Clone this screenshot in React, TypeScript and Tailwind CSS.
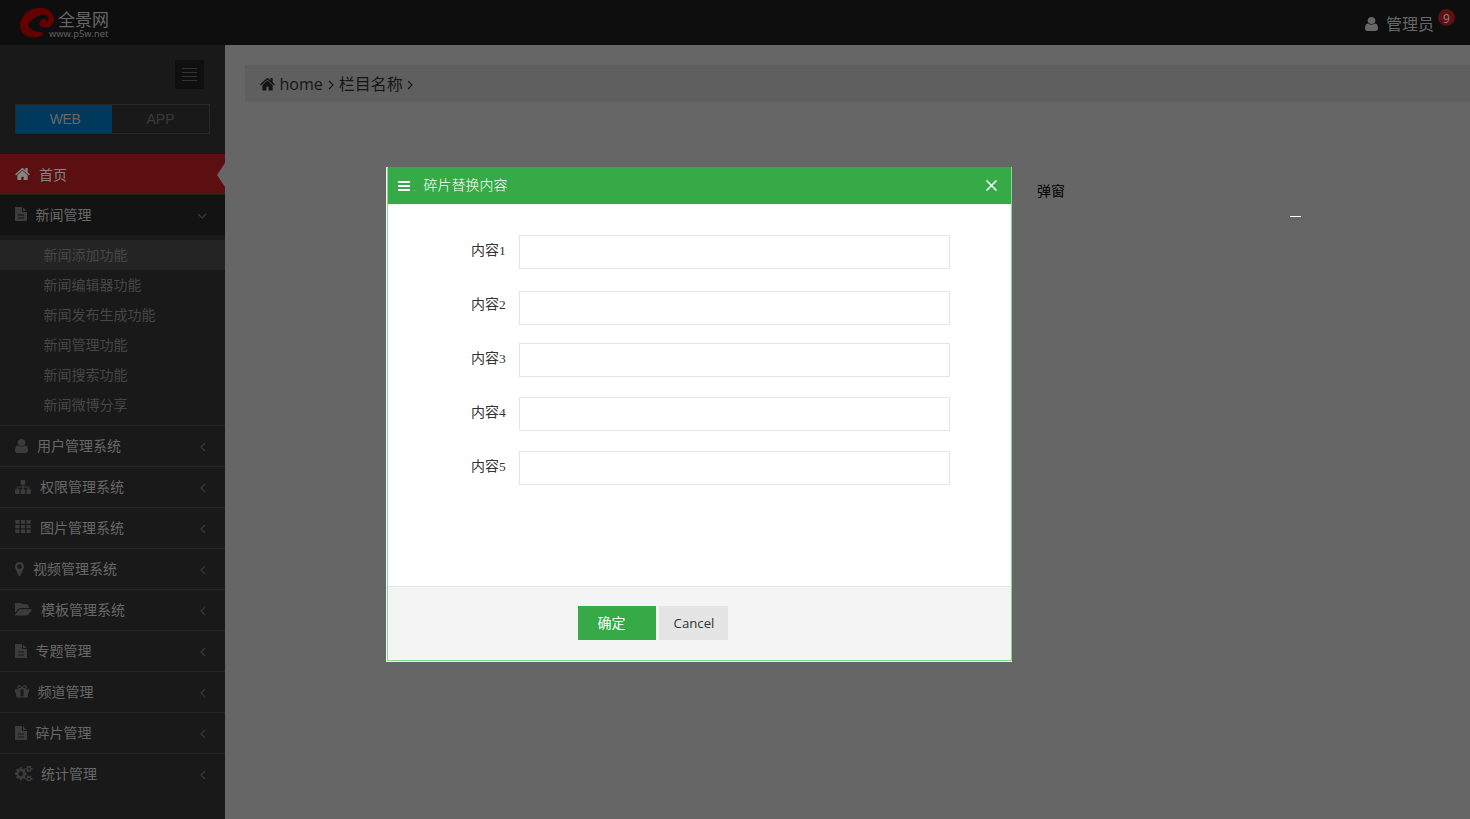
import React from "react";

type Glyph = { box: string; w: string; d: string };

const glyphs: Record<string, Glyph> = {
  home: {
    box: "62 253 1668 1283",
    w: "w-[15px] h-[12.5px]",
    d: "M1472 992v480q0 26-19 45t-45 19h-384v-384h-256v384h-384q-26 0-45-19t-19-45v-480q0-1 .5-3t.5-3l575-474 575 474q1 2 1 6zm223-69l-62 74q-8 9-21 11h-3q-13 0-21-7l-692-577-692 577q-12 8-24 7-13-2-21-11l-62-74q-8-10-7-23.5t11-21.5l719-599q32-26 76-26t76 26l244 204v-195q0-14 9-23t23-9h192q14 0 23 9t9 23v408l219 182q10 8 11 21.5t-7 23.5z",
  },
  user: {
    box: "256 128 1280 1536",
    w: "w-[13px] h-[14px]",
    d: "M1536 1399q0 109-62.5 187t-150.5 78h-854q-88 0-150.5-78t-62.5-187q0-85 8.5-160.5t31.5-152 58.5-131 94-89 134.5-34.5q131 128 313 128t313-128q76 0 134.5 34.5t94 89 58.5 131 31.5 152 8.5 160.5zm-256-887q0 159-112.5 271.5t-271.5 112.5-271.5-112.5-112.5-271.5 112.5-271.5 271.5-112.5 271.5 112.5 112.5 271.5z",
  },
  file: {
    box: "128 0 1536 1792",
    w: "w-[12px] h-[14px]",
    d: "M1596 476q14 14 28 36h-472v-472q22 14 36 28zm-476 164h544v1056q0 40-28 68t-68 28h-1344q-40 0-68-28t-28-68v-1600q0-40 28-68t68-28h800v544q0 40 28 68t68 28zm160 800v-64q0-14-9-23t-23-9h-704q-14 0-23 9t-9 23v64q0 14 9 23t23 9h704q14 0 23-9t9-23zm0-384v-64q0-14-9-23t-23-9h-704q-14 0-23 9t-9 23v64q0 14 9 23t23 9h704q14 0 23-9t9-23z",
  },
  sitemap: {
    box: "0 128 1792 1536",
    w: "w-[16px] h-[14px]",
    d: "M1792 1248v320q0 40-28 68t-68 28h-320q-40 0-68-28t-28-68v-320q0-40 28-68t68-28h96v-192h-512v192h96q40 0 68 28t28 68v320q0 40-28 68t-68 28h-320q-40 0-68-28t-28-68v-320q0-40 28-68t68-28h96v-192h-512v192h96q40 0 68 28t28 68v320q0 40-28 68t-68 28h-320q-40 0-68-28t-28-68v-320q0-40 28-68t68-28h96v-192q0-52 38-90t90-38h512v-192h-96q-40 0-68-28t-28-68v-320q0-40 28-68t68-28h320q40 0 68 28t28 68v320q0 40-28 68t-68 28h-96v192h512q52 0 90 38t38 90v192h96q40 0 68 28t28 68z",
  },
  grid: {
    box: "0 0 16 15",
    w: "w-[16px] h-[15px]",
    d: "M.3 0h4.2v3.8h-4.2zM5.9 0h4.2v3.8h-4.2zM11.5 0h4.2v3.8h-4.2zM.3 5h4.2v3.300h-4.2zM5.9 5h4.2v3.300h-4.2zM11.5 5h4.2v3.300h-4.2zM.3 9.500h4.2v3.500h-4.2zM5.9 9.500h4.2v3.500h-4.2zM11.5 9.500h4.2v3.500h-4.2z",
  },
  marker: {
    box: "384 128 1024 1536",
    w: "w-[9px] h-[14px]",
    d: "M1152 640q0-106-75-181t-181-75-181 75-75 181 75 181 181 75 181-75 75-181zm256 0q0 109-33 179l-364 774q-16 33-47.5 52t-67.5 19-67.5-19-46.5-52l-365-774q-33-70-33-179 0-212 150-362t362-150 362 150 150 362z",
  },
  folder: {
    box: "0 256 1815 1280",
    w: "w-[17px] h-[12.5px]",
    d: "M1815 952q0 31-31 66l-336 396q-43 51-120.5 86.5t-143.5 35.5h-1088q-34 0-60.5-13t-26.5-43q0-31 31-66l336-396q43-51 120.5-86.5t143.5-35.5h1088q34 0 60.5 13t26.5 43zm-343-344v160h-832q-94 0-197 47.5t-164 119.5l-337 396-5 6q0-4-.5-12.5t-.5-12.5v-960q0-92 66-158t158-66h320q92 0 158 66t66 158v32h544q92 0 158 66t66 158z",
  },
  gift: {
    box: "128 192 1536 1344",
    w: "w-[14px] h-[12.5px]",
    d: "M1056 1356v-716h-320v716q0 25 18 38.5t46 13.5h192q28 0 46-13.5t18-38.5zm-456-844h195l-126-161q-26-31-69-31-40 0-68 28t-28 68 28 68 68 28zm688-96q0-40-28-68t-68-28q-43 0-69 31l-125 161h194q40 0 68-28t28-68zm376 256v320q0 14-9 23t-23 9h-96v416q0 40-28 68t-68 28h-1088q-40 0-68-28t-28-68v-416h-96q-14 0-23-9t-9-23v-320q0-14 9-23t23-9h440q-93 0-158.5-65.5t-65.5-158.5 65.5-158.5 158.5-65.5q107 0 168 77l128 165 128-165q61-77 168-77 93 0 158.5 65.5t65.5 158.5-65.5 158.5-158.5 65.5h440q14 0 23 9t9 23z",
  },
  cogs: {
    box: "0 120 1920 1552",
    w: "w-[17.5px] h-[15.5px]",
    d: "M896 896q0-106-75-181t-181-75-181 75-75 181 75 181 181 75 181-75 75-181zm768 512q0-52-38-90t-90-38-90 38-38 90q0 53 37.5 90.5t90.5 37.5 90.5-37.5 37.5-90.5zm0-1024q0-52-38-90t-90-38-90 38-38 90q0 53 37.5 90.5t90.5 37.5 90.5-37.5 37.5-90.5zm-384 421v185q0 10-7 19.5t-16 10.5l-155 24q-11 35-32 76 34 48 90 115 7 11 7 20 0 12-7 19-23 30-82.5 89.5t-78.5 59.5q-11 0-21-7l-115-90q-37 19-77 31-11 108-23 155-7 24-30 24h-186q-11 0-20-7.5t-10-17.5l-23-153q-34-10-75-31l-118 89q-7 7-20 7-11 0-21-8-144-133-144-160 0-9 7-19 10-14 41-53t47-61q-23-44-35-82l-152-24q-10-1-17-9.5t-7-19.5v-185q0-10 7-19.5t16-10.5l155-24q11-35 32-76-34-48-90-115-7-11-7-20 0-12 7-20 22-30 82-89t79-59q11 0 21 7l115 90q34-18 77-32 11-108 23-154 7-24 30-24h186q11 0 20 7.5t10 17.5l23 153q34 10 75 31l118-89q8-7 20-7 11 0 21 8 144 133 144 160 0 8-7 19-12 16-42 54t-45 60q23 48 34 82l152 23q10 2 17 10.5t7 19.5zm640 533v140q0 16-149 31-12 27-30 52 51 113 51 138 0 4-4 7-122 71-124 71-8 0-46-47t-52-68q-20 2-30 2t-30-2q-14 21-52 68t-46 47q-2 0-124-71-4-3-4-7 0-25 51-138-18-25-30-52-149-15-149-31v-140q0-16 149-31 13-29 30-52-51-113-51-138 0-4 4-7 4-2 35-20t59-34 30-16q8 0 46 46.5t52 67.5q20-2 30-2t30 2q51-71 92-112l6-2q4 0 124 70 4 3 4 7 0 25-51 138 17 23 30 52 149 15 149 31zm0-1024v140q0 16-149 31-12 27-30 52 51 113 51 138 0 4-4 7-122 71-124 71-8 0-46-47t-52-68q-20 2-30 2t-30-2q-14 21-52 68t-46 47q-2 0-124-71-4-3-4-7 0-25 51-138-18-25-30-52-149-15-149-31v-140q0-16 149-31 13-29 30-52-51-113-51-138 0-4 4-7 4-2 35-20t59-34 30-16q8 0 46 46.5t52 67.5q20-2 30-2t30 2q51-71 92-112l6-2q4 0 124 70 4 3 4 7 0 25-51 138 17 23 30 52 149 15 149 31z",
  },
};

function Icon({ name, className = "" }: { name: string; className?: string }) {
  const g = glyphs[name];
  return (
    <svg viewBox={g.box} preserveAspectRatio="none" fill="currentColor" className={`shrink-0 ${g.w} ${className}`}>
      <path d={g.d} />
    </svg>
  );
}

function Chevron({ dir, className = "" }: { dir: "left" | "right" | "down"; className?: string }) {
  const paths = { left: "M5 1L1 5L5 9", right: "M1 1L5 5L1 9", down: "M1 1L5 5L9 1" };
  const down = dir === "down";
  return (
    <svg
      viewBox={down ? "0 0 10 6" : "0 0 6 10"}
      fill="none"
      stroke="currentColor"
      strokeWidth="1.1"
      className={`shrink-0 ${down ? "w-[10px] h-[6px]" : "w-[6px] h-[10px]"} ${className}`}
    >
      <path d={paths[dir]} />
    </svg>
  );
}

const newsItems = ["新闻添加功能", "新闻编辑器功能", "新闻发布生成功能", "新闻管理功能", "新闻搜索功能", "新闻微博分享"];

const sections = [
  { icon: "user", label: "用户管理系统", gap: "gap-[9px]" },
  { icon: "sitemap", label: "权限管理系统", gap: "gap-[9px]" },
  { icon: "grid", label: "图片管理系统", gap: "gap-[9px]" },
  { icon: "marker", label: "视频管理系统", gap: "gap-[9px]" },
  { icon: "folder", label: "模板管理系统", gap: "gap-[9px]" },
  { icon: "file", label: "专题管理", gap: "gap-[8.5px]" },
  { icon: "gift", label: "频道管理", gap: "gap-[8.5px]" },
  { icon: "file", label: "碎片管理", gap: "gap-[8.5px]" },
  { icon: "cogs", label: "统计管理", gap: "gap-[8.5px]" },
];

const fields = [
  { label: "内容", index: "1", space: "mt-[30px]", lift: "pb-[4px]" },
  { label: "内容", index: "2", space: "mt-[22px]", lift: "pb-[8px]" },
  { label: "内容", index: "3", space: "mt-[18px]", lift: "pb-[4px]" },
  { label: "内容", index: "4", space: "mt-[20px]", lift: "pb-[4px]" },
  { label: "内容", index: "5", space: "mt-[20px]", lift: "pb-[4px]" },
];

function Header() {
  return (
    <header className="flex h-[45px] shrink-0 justify-between bg-[#0e0e0e] text-[#676767]">
      <div className="flex pl-[20px] pt-[8px]">
        <svg viewBox="0 0 34 30" className="h-[30px] w-[34px] shrink-0" fill="#650000">
          <path d="M0 17.500C0 14 2 10 4.500 6.500C8 2 14 0 20.500 0C28 0 33.500 4.500 34 11C34 16.500 30.500 19.500 26 19.500C21.500 19.500 19 17 19.500 14.500C20 12 23 10.500 25.500 11.300C27.500 12 28 13 26.500 14.300C29 13 29 9.500 26.500 7.800C23 5.500 18.500 7.500 15 10C10.500 13 7.500 15.500 8.500 18C9.500 21 14.500 23.500 20 24C21.500 24.500 23.500 23.500 22.500 25.500L24 26L21.500 27.500L20.500 28.500L18.500 28.500L17 29.500C11 29.500 6 28.500 3.500 25.500C1 22.500 0 20.500 0 17.500Z" />
        </svg>
        <div className="-ml-[5px] flex flex-col">
          <span className="ml-[9px] mt-[2px] text-[17px] leading-[17px]">全景网</span>
          <span className="h-[12px] font-['Open_Sans'] text-[9.4px] leading-[13px]">www.p5w.net</span>
        </div>
      </div>
      <div className="flex pr-[15px] pt-[8px]">
        <Icon name="user" className="mt-[9px]" />
        <span className="ml-[8px] mt-[3px] text-[16px] leading-[24px]">管理员</span>
        <span className="ml-[4px] mt-px flex size-[17px] items-center justify-center rounded-full bg-[#5f0f12] pt-[2px] font-['Open_Sans'] text-[12px] leading-none text-[#858585]">
          9
        </span>
      </div>
    </header>
  );
}

function Sidebar() {
  return (
    <aside className="flex w-[225px] shrink-0 flex-col bg-[#191919] text-[14px] text-[#686868]">
      <div className="ml-[175px] mt-[15px] flex size-[29px] shrink-0 flex-col items-center justify-center gap-[3px] bg-[#0f0f0f]">
        <i className="h-px w-[15px] bg-[#333]" />
        <i className="h-px w-[15px] bg-[#333]" />
        <i className="h-px w-[15px] bg-[#333]" />
        <i className="h-px w-[15px] bg-[#333]" />
      </div>
      <div className="ml-[15px] mt-[15px] flex h-[30px] w-[195px] shrink-0 border border-[#292929] text-center font-['Liberation_Sans'] leading-[28px]">
        <span className="w-[96px] bg-[#00395b] pl-[2px] tracking-[-0.4px]">WEB</span>
        <span className="flex-1 text-[#3a3a3a]">APP</span>
      </div>
      <div className="mt-[20px] flex h-[41px] shrink-0 items-center justify-between border-b border-[#222] bg-[#5b0f11] pl-[15px]">
        <div className="flex items-center gap-[9px] text-[#858585]">
          <Icon name="home" />
          <span className="pt-px">首页</span>
        </div>
        <svg viewBox="0 0 8 24" className="mt-[2px] h-[24px] w-[8px]" fill="#666">
          <path d="M8 0V24L0 12Z" />
        </svg>
      </div>
      <div className="flex h-[40px] shrink-0 items-center bg-[#131313] pl-[15px] pr-[18px]">
        <Icon name="file" className="mb-[2px] text-[#3c3c3c]" />
        <span className="ml-[8.5px] flex-1 pb-[2px]">新闻管理</span>
        <Chevron dir="down" className="mt-px text-[#3a3a3a]" />
      </div>
      <ul className="flex flex-col py-[5px] text-[#464646]">
        {newsItems.map((item, i) => (
          <li key={item} className={`h-[30px] pl-[43.5px] leading-[28px] ${i === 0 ? "bg-[#242424]" : ""}`}>
            {item}
          </li>
        ))}
      </ul>
      {sections.map((s) => (
        <div key={s.label} className={`flex h-[41px] shrink-0 items-center border-t border-[#272727] pl-[15px] pr-[19.5px] ${s.gap}`}>
          <Icon name={s.icon} className="mb-px text-[#3c3c3c]" />
          <span className="flex-1 pb-[2px]">{s.label}</span>
          <Chevron dir="left" className="mt-px text-[#3a3a3a]" />
        </div>
      ))}
    </aside>
  );
}

function Dialog() {
  return (
    <section className="absolute left-[386px] top-[167px] flex h-[495px] w-[626px] border-b border-l border-white bg-white text-[14px] text-[#333]">
      <div className="flex flex-1 flex-col border-x border-b border-[#7be08b]">
        <div className="flex h-[37px] shrink-0 items-center bg-[#36aa47] pl-[10px] pr-[14px] text-white">
          <svg viewBox="0 0 12 10" className="mt-px h-[10px] w-[12px]" stroke="currentColor" strokeWidth="2">
            <path d="M0 1H12M0 5H12M0 9H12" />
          </svg>
          <i className="ml-[4px] mt-[10px] size-px bg-[#5cc8e8]" />
          <h1 className="ml-[8.5px] flex-1 pb-[2px] font-light">碎片替换内容</h1>
          <svg viewBox="0 0 11 11" className="h-[11px] w-[11px]" stroke="currentColor" strokeWidth="1.5">
            <path d="M.5 .5L10.500 10.500M10.500 .5L.5 10.500" />
          </svg>
        </div>
        <form className="flex flex-1 flex-col border-t border-[#eee]">
          {fields.map((f) => (
            <label key={f.index} className={`flex h-[34px] items-center pl-[83px] ${f.space}`}>
              <span className={`w-[48px] ${f.lift}`}>
                {f.label}
                <span className="font-['Liberation_Serif'] text-[13.5px]">{f.index}</span>
              </span>
              <input className="h-[34px] w-[431px] border border-[#e5e5e5] bg-white px-2 outline-none" />
            </label>
          ))}
        </form>
        <footer className="flex h-[74px] shrink-0 gap-[3px] border-t border-[#e5e5e5] bg-[#f4f4f4] pl-[190px] pt-[19px]">
          <button type="button" className="h-[34px] w-[78px] bg-[#36aa47] pb-[2px] pr-[11px] text-white">确定</button>
          <button type="button" className="h-[34px] w-[69px] bg-[#e5e5e5] pl-px pt-[2px] font-['Open_Sans'] text-[13.2px]">Cancel</button>
        </footer>
      </div>
    </section>
  );
}

export default function App() {
  return (
    <div className="relative flex h-[819px] w-[1470px] flex-col overflow-hidden bg-[#666] font-['Noto_Sans_CJK_SC',sans-serif]">
      <Header />
      <div className="flex flex-1">
        <Sidebar />
        <main className="flex-1 pl-[20px] pt-[20px]">
          <nav className="flex h-[37px] items-center bg-[#5f5f5f] pl-[15px] text-[16px] text-[#151515]">
            <Icon name="home" className="mt-[2px]" />
            <span className="ml-[4.5px] font-['Open_Sans']">home</span>
            <Chevron dir="right" className="ml-[5px] mt-[2px]" />
            <span className="ml-[5px] pb-px">栏目名称</span>
            <Chevron dir="right" className="ml-[4px] mt-[2px]" />
          </nav>
        </main>
      </div>
      <Dialog />
      <span className="absolute left-[1037px] top-[180px] text-[14px] leading-[20px] text-black">弹窗</span>
      <i className="absolute left-[1290px] top-[216px] h-px w-[11px] bg-white" />
    </div>
  );
}
